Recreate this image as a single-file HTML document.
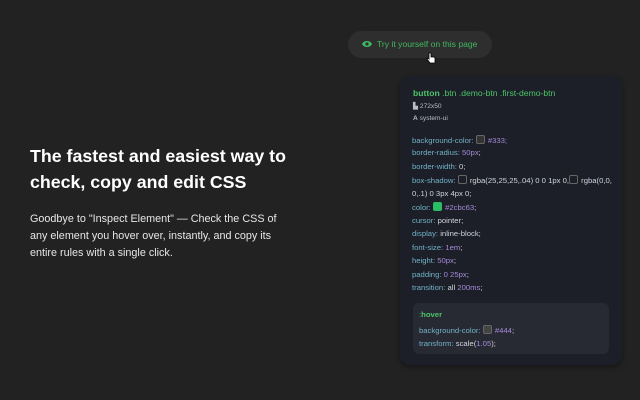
<!DOCTYPE html>
<html><head><style>
body{margin:0;width:640px;height:400px;background:#222222;font-family:"Liberation Sans",sans-serif;position:relative;overflow:hidden}
h1{position:absolute;left:30px;top:143px;margin:0;font-size:17.8px;line-height:26px;color:#fff;font-weight:bold;width:300px}
p{position:absolute;left:30px;top:211px;margin:0;font-size:10.8px;line-height:17px;color:#e6e6e6;width:264px}
.btn{position:absolute;left:348px;top:31px;width:144px;height:27px;border-radius:14px;background:#2e2e2e;color:#3fb85f;font-size:8.6px;line-height:27px;box-sizing:border-box;padding-left:29px}
.eye{position:absolute;left:14px;top:9px}
.panel{position:absolute;left:400px;top:76px;width:222px;height:289px;background:#1c1f27;border-radius:10px;box-shadow:0 2px 6px rgba(0,0,0,.4);font-size:7.7px;color:#cfd3dc}
.t{position:absolute;left:13px;top:12px;font-size:8.6px;font-weight:bold;color:#4cc36a}
.t span{font-weight:normal}
.m{position:absolute;left:13px;font-size:6.6px;color:#b8bcc4}
.l{position:absolute;left:12px;white-space:nowrap}
.k{color:#72b1c8}.v{color:#a58ad8}
.sw{display:inline-block;width:7px;height:7px;border-radius:2px;border:1px solid #666;vertical-align:-1px;margin-right:1px}
.hov{position:absolute;left:13px;top:227px;width:196px;height:51px;background:#272a33;border-radius:6px}
</style></head><body>
<h1>The fastest and easiest way to check, copy and edit CSS</h1>
<p>Goodbye to "Inspect Element" — Check the CSS of any element you hover over, instantly, and copy its entire rules with a single click.</p>
<div class="btn"><svg class="eye" width="10" height="8" viewBox="0 0 10 8"><path d="M0 4C2 0 8 0 10 4C8 8 2 8 0 4Z" fill="#3fb85f"/><circle cx="5" cy="4" r="1.6" fill="#2e2e2e"/></svg>Try it yourself on this page</div>
<svg style="position:absolute;left:426px;top:52px" width="10" height="12" viewBox="0 0 10 12"><path d="M3 1v6L2 6 1 7l3 4h5V6L8 5H5V1Z" fill="#fff" stroke="#000" stroke-width=".8"/></svg>
<div class="panel">
<div class="t">button <span>.btn .demo-btn .first-demo-btn</span></div>
<div class="m" style="top:26px">▙ 272x50</div>
<div class="m" style="top:39px"><b>A</b> system-ui</div>
<div class="l" style="top:59px"><span class="k">background-color:</span> <span class="sw" style="background:#333"></span> <span class="v">#333;</span></div>
<div class="l" style="top:72px"><span class="k">border-radius:</span> <span class="v">50px</span>;</div>
<div class="l" style="top:86px"><span class="k">border-width:</span> 0;</div>
<div class="l" style="top:99px"><span class="k">box-shadow:</span> <span class="sw"></span> rgba(25,25,25,.04) 0 0 1px 0,<span class="sw"></span> rgba(0,0,</div>
<div class="l" style="top:113px">0,.1) 0 3px 4px 0;</div>
<div class="l" style="top:126px"><span class="k">color:</span> <span class="sw" style="background:#2cbc63;border-color:#2cbc63"></span> <span class="v">#2cbc63</span>;</div>
<div class="l" style="top:140px"><span class="k">cursor:</span> pointer;</div>
<div class="l" style="top:153px"><span class="k">display:</span> inline-block;</div>
<div class="l" style="top:167px"><span class="k">font-size:</span> <span class="v">1em</span>;</div>
<div class="l" style="top:180px"><span class="k">height:</span> <span class="v">50px</span>;</div>
<div class="l" style="top:194px"><span class="k">padding:</span> <span class="v">0 25px</span>;</div>
<div class="l" style="top:207px"><span class="k">transition:</span> all <span class="v">200ms</span>;</div>
<div class="hov">
<div class="l" style="left:6px;top:7px;color:#4cc36a">:<b>hover</b></div>
<div class="l" style="left:6px;top:22px"><span class="k">background-color:</span> <span class="sw" style="background:#444"></span> <span class="v">#444</span>;</div>
<div class="l" style="left:6px;top:36px"><span class="k">transform:</span> scale(<span class="v">1.05</span>);</div>
</div>
</div>
</body></html>
